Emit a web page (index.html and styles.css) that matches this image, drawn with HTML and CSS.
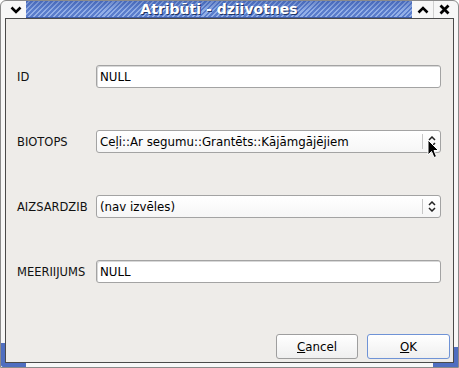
FILE: index.html
```html
<!DOCTYPE html>
<html lang="lv">
<head>
    <meta charset="UTF-8">
    <title>Atribūti - dziivotnes</title>
    <link rel="stylesheet" href="styles.css">
</head>
<body>

    <div class="window">
        <div class="titlebar">
            <div class="menu-btn">
                <svg width="12" height="8" viewBox="0 0 12 8"><polyline points="1.5,1.5 6,6 10.5,1.5" fill="none" stroke="#000" stroke-width="2.6"/></svg>
            </div>
            <div class="caption">Atribūti - dziivotnes</div>
            <div class="title-btn">
                <svg width="12" height="8" viewBox="0 0 12 8"><polyline points="1.5,6.5 6,2 10.5,6.5" fill="none" stroke="#000" stroke-width="2.6"/></svg>
            </div>
            <div class="title-btn">
                <svg width="11" height="11" viewBox="0 0 11 11"><path d="M1.5 1.5 L9.5 9.5 M9.5 1.5 L1.5 9.5" fill="none" stroke="#000" stroke-width="2.8"/></svg>
            </div>
        </div>

        <div class="frame">
            <div class="client">
                <div class="form">
                    <label class="field-label">ID</label>
                    <div class="line-edit">NULL</div>

                    <label class="field-label">BIOTOPS</label>
                    <div class="combo">
                        <span class="combo-text">Ceļi::Ar segumu::Grantēts::Kājāmgājējiem</span>
                        <span class="combo-arrow">
                            <svg width="8" height="11" viewBox="0 0 8 11"><polyline points="1,4 4,1 7,4" fill="none" stroke="#222" stroke-width="1.5"/><polyline points="1,7 4,10 7,7" fill="none" stroke="#222" stroke-width="1.5"/></svg>
                        </span>
                    </div>

                    <label class="field-label">AIZSARDZIB</label>
                    <div class="combo">
                        <span class="combo-text">(nav izvēles)</span>
                        <span class="combo-arrow">
                            <svg width="8" height="11" viewBox="0 0 8 11"><polyline points="1,4 4,1 7,4" fill="none" stroke="#222" stroke-width="1.5"/><polyline points="1,7 4,10 7,7" fill="none" stroke="#222" stroke-width="1.5"/></svg>
                        </span>
                    </div>

                    <label class="field-label">MEERIIJUMS</label>
                    <div class="line-edit">NULL</div>
                </div>

                <div class="buttons">
                    <button class="btn"><u>C</u>ancel</button>
                    <button class="btn btn-default"><u>O</u>K</button>
                </div>
            </div>
        </div>

        <!-- kursors virs kombo -->
        <svg class="cursor" width="13" height="20" viewBox="0 0 13 20">
            <path d="M1 1 L1 16 L4.5 12.5 L7 18.5 L9.5 17.5 L7 11.5 L11.5 11.5 Z" fill="#000" stroke="#fff" stroke-width="1"/>
        </svg>
    </div>

</body>
</html>
```

FILE: styles.css
```css
* {
    box-sizing: border-box;
    margin: 0;
    padding: 0;
}

body {
    font-family: 'DejaVu Sans', sans-serif;
    font-size: 11.5px;
    color: #000;
    background-color: #ffffff;
}

.window {
    position: relative;
    width: 459px;
    height: 368px;
    border: 1px solid #8a8a8a;
    border-radius: 6px 6px 0 0;
    background-color: #f7f7f7;
    display: flex;
    flex-direction: column;
    overflow: hidden;
}

/* Loga virsraksts */
.titlebar {
    height: 17px;
    display: flex;
    flex-shrink: 0;
    padding-right: 4px;
}

.menu-btn {
    width: 25px;
    display: flex;
    justify-content: center;
    align-items: center;
    padding-left: 4px;
}

.caption {
    flex: 1;
    text-align: center;
    font-weight: bold;
    font-size: 14px;
    line-height: 16px;
    color: #fff;
    text-shadow: 1px 1px 0 #1f3566;
    border-bottom: 1px solid #3d5ca8;
    background:
        linear-gradient(to bottom, rgba(40, 70, 150, 0.35), rgba(255, 255, 255, 0) 60%),
        repeating-linear-gradient(135deg, #5a7dcc 0, #5a7dcc 2px, #93afe6 2px, #93afe6 3.5px);
}

.title-btn {
    width: 21px;
    display: flex;
    justify-content: center;
    align-items: center;
}

.title-btn + .title-btn {
    border-left: 1px solid #d0d0d0;
}

.frame {
    flex: 1;
    padding: 0 4px 4px;
    position: relative;
}

/* Zilie izmēru maiņas stūri */
.frame::before,
.frame::after {
    content: "";
    position: absolute;
    bottom: 0;
    height: 20px;
    width: 21px;
    border-bottom: 4px solid #4f6ec0;
}

.frame::before {
    left: 0;
    border-left: 4px solid #4f6ec0;
    border-bottom-left-radius: 3px;
}

.frame::after {
    right: 0;
    border-right: 4px solid #4f6ec0;
    height: 16px;
}

.client {
    height: 100%;
    border: 1px solid #4a4a4a;
    background-color: #eeece9;
    display: flex;
    flex-direction: column;
    padding: 46px 3px 3px 11px;
}

.form {
    display: grid;
    grid-template-columns: 67px 1fr;
    column-gap: 12px;
    row-gap: 42px;
    align-items: center;
    padding-right: 9px;
}

.field-label {
    color: #111;
    font-size: 11.5px;
}

.line-edit,
.combo {
    height: 23px;
    border: 1px solid #a3a3a3;
    border-radius: 3px;
    background-color: #fff;
    display: flex;
    align-items: center;
    padding-left: 3px;
    font-size: 11.8px;
    box-shadow: inset 1px 1px 0 #d8d8d8;
}

.combo {
    box-shadow: none;
    background: linear-gradient(to bottom, #ffffff, #f6f6f6);
}

.combo-text {
    flex: 1;
    white-space: nowrap;
    overflow: hidden;
}

.combo-arrow {
    width: 18px;
    height: 15px;
    border-left: 1px solid #c6c6c6;
    display: flex;
    justify-content: center;
    align-items: center;
    padding-left: 1px;
}

.buttons {
    margin-top: auto;
    display: flex;
    justify-content: flex-end;
    gap: 9px;
}

.btn {
    width: 82px;
    height: 25px;
    font-family: 'DejaVu Sans', sans-serif;
    font-size: 11.8px;
    color: #000;
    border: 1px solid #9e9e9e;
    border-radius: 3px;
    background: linear-gradient(to bottom, #ffffff, #efefef);
}

.btn-default {
    width: 83px;
    border-color: #6f93d6;
}

.cursor {
    position: absolute;
    left: 426px;
    top: 138px;
}
```
